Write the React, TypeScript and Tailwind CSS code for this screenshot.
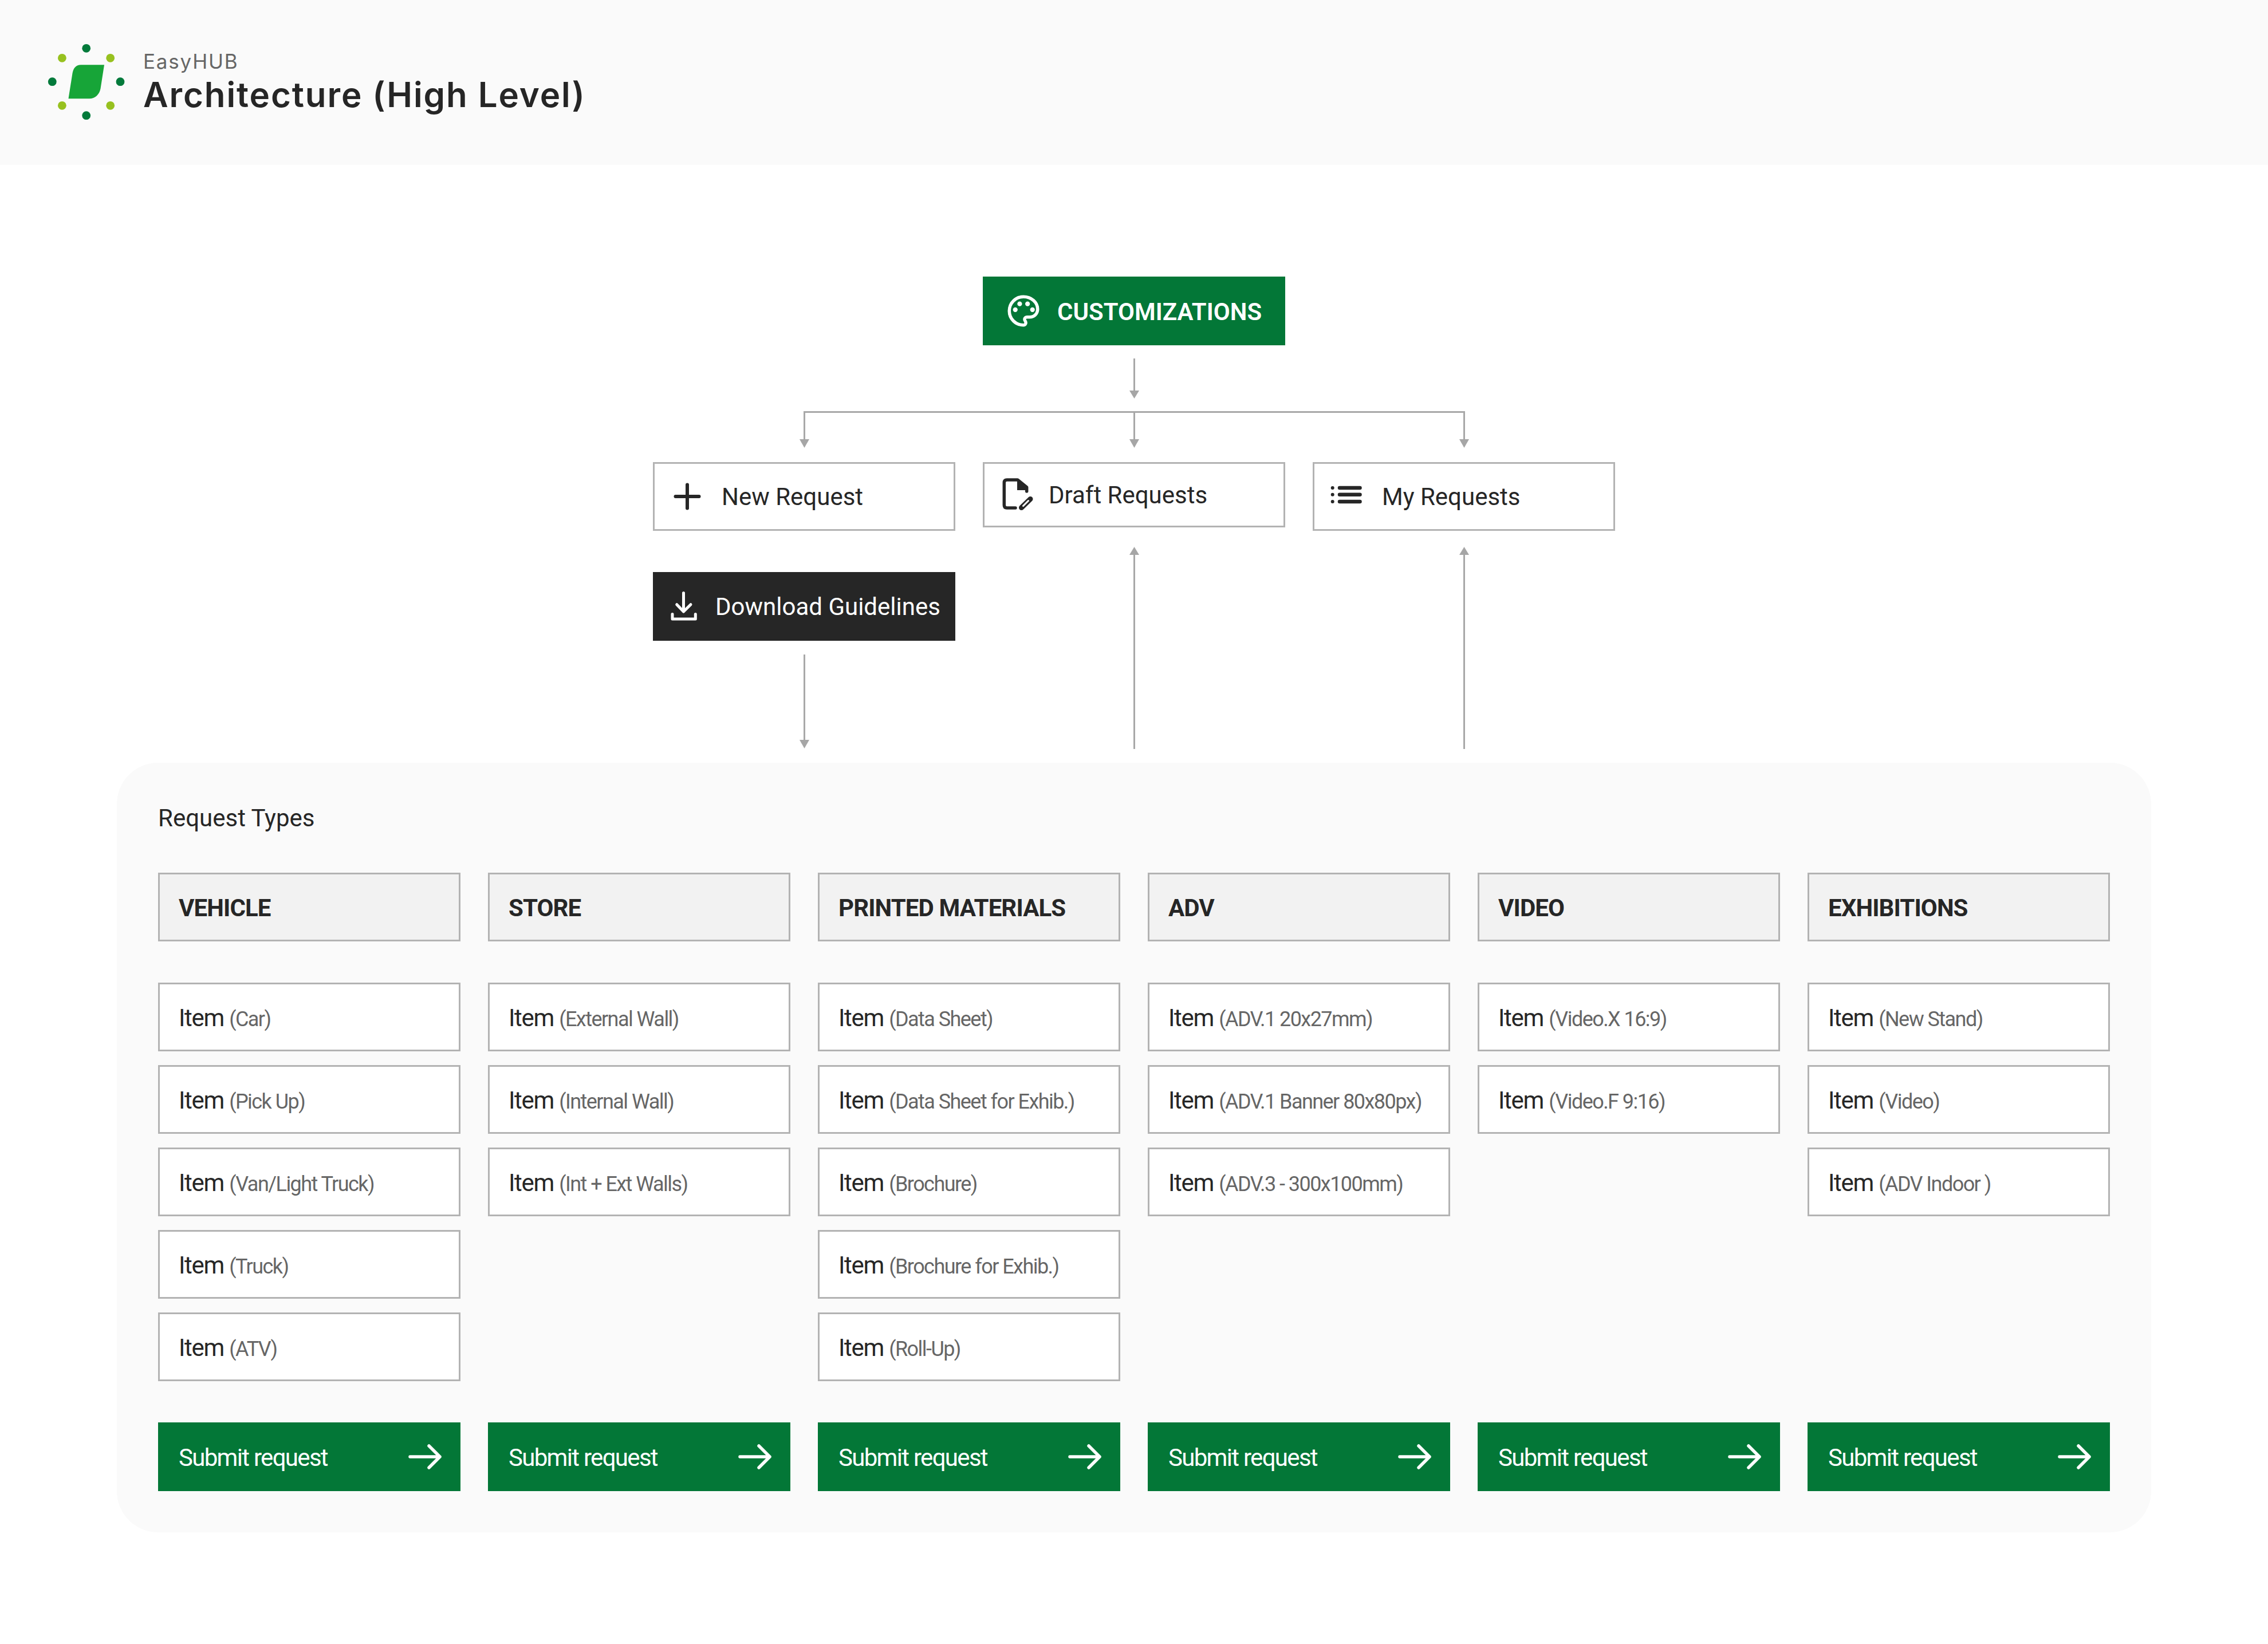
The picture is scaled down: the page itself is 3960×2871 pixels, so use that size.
import React from 'react';

interface RequestColumn {
  title: string;
  items: string[];
}

const columns: RequestColumn[] = [
  { title: 'VEHICLE', items: ['(Car)', '(Pick Up)', '(Van/Light Truck)', '(Truck)', '(ATV)'] },
  { title: 'STORE', items: ['(External Wall)', '(Internal Wall)', '(Int + Ext Walls)'] },
  {
    title: 'PRINTED MATERIALS',
    items: ['(Data Sheet)', '(Data Sheet for Exhib.)', '(Brochure)', '(Brochure for Exhib.)', '(Roll-Up)'],
  },
  { title: 'ADV', items: ['(ADV.1 20x27mm)', '(ADV.1 Banner 80x80px)', '(ADV.3 - 300x100mm)'] },
  { title: 'VIDEO', items: ['(Video.X 16:9)', '(Video.F 9:16)'] },
  { title: 'EXHIBITIONS', items: ['(New Stand)', '(Video)', '(ADV Indoor )'] },
];

const Logo = () => (
  <svg width="190" height="170" viewBox="0 0 190 170" className="shrink-0">
    <g fill="#037a3b">
      <circle cx="90.7" cy="25.3" r="7.4" />
      <circle cx="90.7" cy="142.7" r="7.4" />
      <circle cx="31.3" cy="83.7" r="7.4" />
      <circle cx="150" cy="83.7" r="7.4" />
    </g>
    <g fill="#97c11f">
      <circle cx="48.4" cy="42.3" r="7.4" />
      <circle cx="132.7" cy="42.3" r="7.4" />
      <circle cx="48.4" cy="125.3" r="7.4" />
      <circle cx="132.7" cy="125.3" r="7.4" />
    </g>
    <path d="M81 54.3H122L115.5 96C113.5 106 106 113.3 96 113.3H59.5L66.5 69C68 60 73 54.3 81 54.3Z" fill="#17a538" />
  </svg>
);

const PaletteIcon = () => (
  <svg width="66" height="66" viewBox="0 0 24 24" fill="none" className="-mx-[5px] shrink-0">
    <path
      d="M12 3C7 3 3 7 3 12s4 9 9 9c.9 0 1.500-.7 1.500-1.500 0-.4-.2-.8-.4-1.100-.3-.3-.4-.7-.4-1.100 0-.9.7-1.400 1.500-1.400H16c2.800 0 5-2.200 5-5 0-4.400-4-7.900-9-7.900z"
      stroke="#fff"
      strokeWidth="2"
      strokeLinejoin="round"
    />
    <g fill="#fff">
      <circle cx="6.800" cy="11.200" r="1.500" />
      <circle cx="9.600" cy="7.500" r="1.500" />
      <circle cx="14.600" cy="7.500" r="1.500" />
      <circle cx="17.700" cy="11.200" r="1.500" />
    </g>
  </svg>
);

const PlusIcon = () => (
  <svg width="48" height="48" viewBox="0 0 48 48" fill="none" stroke="#262626" strokeWidth="6" strokeLinecap="round">
    <path d="M24 3.5V44.5M3.5 24H44.5" />
  </svg>
);

const DraftIcon = () => (
  <svg width="80" height="80" viewBox="0 0 80 80" fill="none" className="-m-[13px]">
    <path
      d="M33 63H18Q13.3 63 13.3 58V19Q13.3 14 18 14H36.7L52.7 27V34"
      stroke="#262626"
      strokeWidth="5.5"
      strokeLinecap="round"
      strokeLinejoin="round"
    />
    <path d="M36 13L54 28V32H36Z" fill="#262626" />
    <path d="M59 47.5L43.5 62.5" stroke="#262626" strokeWidth="9" strokeLinecap="round" />
    <path d="M55.5 50.5L46.5 59.5" stroke="#fff" strokeWidth="3" strokeLinecap="round" />
  </svg>
);

const ListIcon = () => (
  <svg width="80" height="80" viewBox="0 0 80 80" fill="none" className="-m-[13px]">
    <g fill="#262626">
      <circle cx="12.7" cy="25" r="3" />
      <circle cx="12.7" cy="36.8" r="3" />
      <circle cx="12.7" cy="49" r="3" />
    </g>
    <path d="M25 25H60.500M25 36.800H60.500M25 49H60.500" stroke="#262626" strokeWidth="6.500" strokeLinecap="round" />
  </svg>
);

const DownloadIcon = () => (
  <svg width="80" height="80" viewBox="0 0 80 80" fill="none" className="-m-[13px]">
    <path
      d="M33.500 16.500V49M21.700 36.700L33.500 49L46 36.700M14 53.500V62H54.300V53.500"
      stroke="#fff"
      strokeWidth="5"
      strokeLinecap="round"
      strokeLinejoin="round"
    />
  </svg>
);

const ArrowRight = () => (
  <svg width="60" height="44" viewBox="0 0 60 44" fill="none" stroke="#fff" strokeWidth="5.500" strokeLinecap="round" strokeLinejoin="round">
    <path d="M4 22H56M37 3L56 22L37 41" />
  </svg>
);

// top connector, drawn in the coordinates of the three-column row
const TopConnector = () => (
  <svg width="1680" height="204" viewBox="0 0 1680 204" fill="none" className="block">
    <g stroke="#a8a8a8" strokeWidth="3">
      <path d="M840.500 23V80" />
      <path d="M264.500 166V116.500H1416.500V166" />
      <path d="M840.500 116.500V166" />
    </g>
    <g fill="#a6a6a6">
      <path d="M832 79H849L840.500 93Z" />
      <path d="M256 164H273L264.500 179Z" />
      <path d="M832 164H849L840.500 179Z" />
      <path d="M1408 164H1425L1416.500 179Z" />
    </g>
  </svg>
);

const DownConnector = () => (
  <svg viewBox="0 0 528 165" width="528" height="165" fill="none" className="block mt-6">
    <path d="M264.500 0V151" stroke="#a8a8a8" strokeWidth="3" />
    <path d="M256 149H273L264.500 164Z" fill="#a6a6a6" />
  </svg>
);

const UpConnector = ({ height }: { height: number }) => (
  <svg viewBox={`0 0 528 ${height}`} width="528" height={height} fill="none" className="block mt-auto mb-6">
    <path d={`M264.500 12V${height}`} stroke="#a8a8a8" strokeWidth="3" />
    <path d="M256 14H273L264.500 0Z" fill="#a6a6a6" />
  </svg>
);

const ItemBox = ({ detail }: { detail: string }) => (
  <div className="flex h-[120px] items-center border-[3px] border-[#b3b3b3] bg-white pl-[33px] pt-[3px]">
    <span className="text-[42px] tracking-[-1.3px] text-[#262626]">
      Item <span className="text-[36px] tracking-[-1.55px] text-[#666666]">{detail}</span>
    </span>
  </div>
);

const SubmitButton = () => (
  <div className="flex h-[120px] items-center justify-between bg-[#037737] pl-9 pr-8 text-white">
    <span className="pt-[3px] text-[42px] tracking-[-1.7px]">Submit request</span>
    <ArrowRight />
  </div>
);

export default function App() {
  return (
    <div className="min-h-[2871px] bg-white font-['Roboto',sans-serif] text-[#262626]">
      <header className="flex h-[288px] items-center bg-[#fafafa] pl-[60px]">
        <Logo />
        <div className="flex flex-col pb-[3px] font-['Inter',sans-serif]">
          <span className="mb-[3px] text-[35px] leading-[42px] tracking-[1.8px] text-[#666666]">EasyHUB</span>
          <span className="text-[60px] font-semibold leading-[68px] tracking-[1.9px]">Architecture (High Level)</span>
        </div>
      </header>

      <div className="flex flex-col items-center pt-[195px]">
        <div className="flex h-[120px] w-[528px] items-center gap-[31px] bg-[#037737] pl-[43px] text-[42px] font-semibold text-white">
          <PaletteIcon />
          <span className="pt-[2px]">CUSTOMIZATIONS</span>
        </div>

        <TopConnector />

        <div className="flex h-[525px] w-[1680px] gap-12">
          <div className="flex w-[528px] flex-col">
            <div className="flex h-[120px] items-center gap-9 border-[3px] border-[#b3b3b3] bg-white pl-[33px] text-[42px]">
              <PlusIcon />
              <span>New Request</span>
            </div>
            <div className="mt-[72px] flex h-[120px] items-center gap-[22px] bg-[#262626] pl-[33px] text-[42px] text-white">
              <DownloadIcon />
              <span>Download Guidelines</span>
            </div>
            <DownConnector />
          </div>
          <div className="flex w-[528px] flex-col">
            <div className="flex h-[114px] items-center gap-6 border-[3px] border-[#b3b3b3] bg-white pl-[34px] text-[42px]">
              <DraftIcon />
              <span>Draft Requests</span>
            </div>
            <UpConnector height={353} />
          </div>
          <div className="flex w-[528px] flex-col">
            <div className="flex h-[120px] items-center gap-8 border-[3px] border-[#b3b3b3] bg-white pl-8 text-[42px]">
              <ListIcon />
              <span>My Requests</span>
            </div>
            <UpConnector height={353} />
          </div>
        </div>

        <section className="flex w-[3552px] flex-col rounded-[72px] bg-[#fafafa] p-[72px]">
          <h2 className="h-12 pt-[1px] text-[42px] font-normal leading-[48px]">Request Types</h2>
          <div className="mt-[72px] grid grid-cols-6 gap-12">
            {columns.map((column) => (
              <div key={column.title} className="flex flex-col">
                <div className="flex h-[120px] items-center border-[3px] border-[#b3b3b3] bg-[#f2f2f2] pl-[33px] pt-[2px] text-[42px] font-bold tracking-[-0.9px]">
                  {column.title}
                </div>
                <div className="mt-[72px] flex h-[696px] flex-col gap-6">
                  {column.items.map((detail) => (
                    <ItemBox key={detail} detail={detail} />
                  ))}
                </div>
                <div className="mt-[72px]">
                  <SubmitButton />
                </div>
              </div>
            ))}
          </div>
        </section>
      </div>
    </div>
  );
}
